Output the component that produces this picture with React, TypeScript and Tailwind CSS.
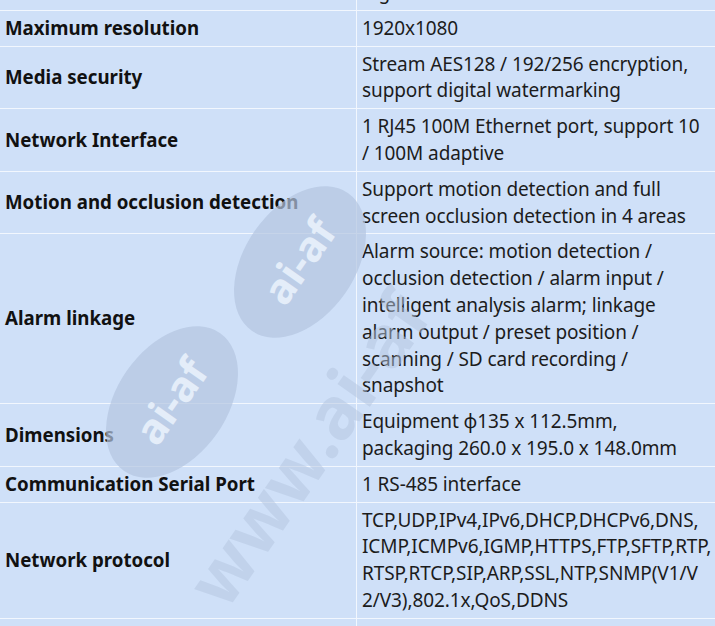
import React from 'react'

const rows: { label: string; lines: string[] }[] = [
  { label: 'Maximum resolution', lines: ['1920x1080'] },
  { label: 'Media security', lines: ['Stream AES128 / 192/256 encryption,', 'support digital watermarking'] },
  { label: 'Network Interface', lines: ['1 RJ45 100M Ethernet port, support 10', '/ 100M adaptive'] },
  {
    label: 'Motion and occlusion detection',
    lines: ['Support motion detection and full', 'screen occlusion detection in 4 areas'],
  },
  {
    label: 'Alarm linkage',
    lines: [
      'Alarm source: motion detection /',
      'occlusion detection / alarm input /',
      'intelligent analysis alarm; linkage',
      'alarm output / preset position /',
      'scanning / SD card recording /',
      'snapshot',
    ],
  },
  { label: 'Dimensions', lines: ['Equipment φ135 x 112.5mm,', 'packaging 260.0 x 195.0 x 148.0mm'] },
  { label: 'Communication Serial Port', lines: ['1 RS-485 interface'] },
  {
    label: 'Network protocol',
    lines: [
      'TCP,UDP,IPv4,IPv6,DHCP,DHCPv6,DNS,',
      'ICMP,ICMPv6,IGMP,HTTPS,FTP,SFTP,RTP,',
      'RTSP,RTCP,SIP,ARP,SSL,NTP,SNMP(V1/V',
      '2/V3),802.1x,QoS,DDNS',
    ],
  },
  { label: 'Power supply', lines: ['DC12V'] },
]

function Row({ label, lines }: { label: string; lines: string[] }) {
  return (
    <div className="grid grid-cols-[357px_1fr] border-b border-[#f2f7fe]">
      <div className="flex items-center border-r border-[#f2f7fe] px-[5px] text-[18.7px] font-bold text-[#111111]">
        {label}
      </div>
      <div className="px-[5px] py-[4px] text-[19px] tracking-[-0.1px] text-[#1c1c1c]">
        {lines.map((l, i) => (
          <div key={i} className="whitespace-nowrap">
            {l}
          </div>
        ))}
      </div>
    </div>
  )
}

export default function App() {
  return (
    <div className="relative h-[626px] w-[715px] overflow-hidden bg-[#cfe0f8]">
      <div
        className="-mt-[25px] leading-[26.8px]"
        style={{ fontFamily: '"Noto Sans", "Open Sans", sans-serif' }}
      >
        <Row label="Certificate" lines={['digital certificate']} />
        {rows.map((r) => (
          <Row key={r.label} label={r.label} lines={r.lines} />
        ))}
      </div>

      {/* watermark */}
      <svg
        className="pointer-events-none absolute inset-0"
        width="715"
        height="626"
        viewBox="0 0 715 626"
      >
        <g transform="translate(300 262) rotate(-55)">
          <ellipse rx="84" ry="55" fill="#b4c5df" opacity="0.7" />
          <text
            x="0"
            y="14"
            textAnchor="middle"
            fontSize="42"
            fontWeight="700"
            fill="#e4edf9"
            fontFamily="Noto Sans, sans-serif"
          >
            ai-af
          </text>
        </g>
        <g transform="translate(172 402) rotate(-55)">
          <ellipse rx="84" ry="55" fill="#b4c5df" opacity="0.7" />
          <text
            x="0"
            y="14"
            textAnchor="middle"
            fontSize="42"
            fontWeight="700"
            fill="#e4edf9"
            fontFamily="Noto Sans, sans-serif"
          >
            ai-af
          </text>
        </g>
        <g transform="translate(226 612) rotate(-55)">
          <text
            x="0"
            y="0"
            fontSize="72"
            fontWeight="700"
            fill="#b4c5df"
            opacity="0.5"
            fontFamily="Noto Sans, sans-serif"
          >
            www.ai-af
          </text>
        </g>
      </svg>
    </div>
  )
}
